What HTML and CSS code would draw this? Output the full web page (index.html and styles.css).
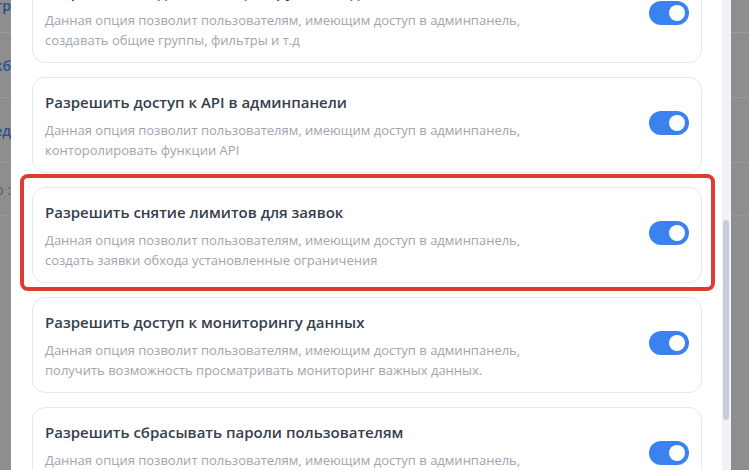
FILE: index.html
```html
<!DOCTYPE html>
<html lang="ru">
<head>
<meta charset="utf-8">
<link rel="stylesheet" href="styles.css">
</head>
<body>
<div class="screen">
  <div class="backdrop-left">
    <div class="bg-row bg-row-first"><span class="bg-link">Фильтр</span></div>
    <div class="bg-row"><span class="bg-link">Блокнот кб</span></div>
    <div class="bg-row"><span class="bg-link">Последствия ед</span></div>
    <div class="bg-row bg-row-short"><span class="bg-muted">Нет данных о :</span></div>
  </div>
  <div class="modal">
    <div class="modal-body">
      <div class="list">
        <div class="card">
          <div class="card-text">
            <div class="card-title">Разрешить создавать общие группы в админпанели</div>
            <div class="card-desc">Данная опция позволит пользователям, имеющим доступ в админпанель,<br>создавать общие группы, фильтры и т.д</div>
          </div>
          <span class="toggle"><span class="knob"></span></span>
        </div>
        <div class="card">
          <div class="card-text">
            <div class="card-title">Разрешить доступ к API в админпанели</div>
            <div class="card-desc">Данная опция позволит пользователям, имеющим доступ в админпанель,<br>конторолировать функции API</div>
          </div>
          <span class="toggle"><span class="knob"></span></span>
        </div>
        <div class="card card-highlight">
          <div class="card-text">
            <div class="card-title">Разрешить снятие лимитов для заявок</div>
            <div class="card-desc">Данная опция позволит пользователям, имеющим доступ в админпанель,<br>создать заявки обхода установленные ограничения</div>
          </div>
          <span class="toggle"><span class="knob"></span></span>
        </div>
        <div class="card">
          <div class="card-text">
            <div class="card-title">Разрешить доступ к мониторингу данных</div>
            <div class="card-desc">Данная опция позволит пользователям, имеющим доступ в админпанель,<br>получить возможность просматривать мониторинг важных данных.</div>
          </div>
          <span class="toggle"><span class="knob"></span></span>
        </div>
        <div class="card">
          <div class="card-text">
            <div class="card-title">Разрешить сбрасывать пароли пользователям</div>
            <div class="card-desc">Данная опция позволит пользователям, имеющим доступ в админпанель,<br>сбрасывать пароли других пользователей</div>
          </div>
          <span class="toggle"><span class="knob"></span></span>
        </div>
      </div>
    </div>
    <div class="scrollbar"><div class="thumb"></div></div>
  </div>
  <div class="backdrop-right">
    <div class="bg-row bg-row-first"></div>
    <div class="bg-row"></div>
    <div class="bg-row"></div>
    <div class="bg-row bg-row-short"></div>
  </div>
</div>
</body>
</html>
```

FILE: styles.css
```css
* { box-sizing: border-box; }
html, body {
  margin: 0;
  padding: 0;
  width: 749px;
  height: 470px;
  overflow: hidden;
  background: #8e8e8e;
  font-family: "Open Sans", "Noto Sans", sans-serif;
}
.screen {
  display: flex;
  width: 749px;
  height: 470px;
  overflow: hidden;
}
.backdrop-left, .backdrop-right {
  flex: none;
  display: flex;
  flex-direction: column;
  background: #8e8e8e;
  overflow: hidden;
}
.backdrop-left { width: 11px; }
.backdrop-right { width: 18px; }
.bg-row {
  flex: none;
  height: 65px;
  border-bottom: 1px solid #9b9b9b;
  display: flex;
  align-items: center;
  justify-content: flex-end;
  white-space: nowrap;
  font-size: 14px;
  font-weight: 600;
}
.bg-row-first {
  height: 33px;
  align-items: flex-start;
  padding-top: 0;
  line-height: 12px;
}
.bg-row-short { height: 53px; border-bottom-color: #979797; }
.bg-link { color: #2c4f8e; }
.bg-muted { color: #5f5f5f; font-weight: 400; }

.modal {
  flex: none;
  width: 720px;
  height: 470px;
  display: flex;
  background: #ffffff;
}
.modal-body {
  flex: 1;
  overflow: hidden;
  padding: 0 20px 0 21px;
}
.list {
  margin-top: -33px;
  display: flex;
  flex-direction: column;
  gap: 14px;
}
.card {
  position: relative;
  height: 96px;
  border: 1px solid #e6e8ed;
  border-radius: 13px;
  padding: 14px 12px 0 12px;
  display: flex;
  align-items: flex-start;
  justify-content: space-between;
}
.card-text { flex: 1; min-width: 0; }
.card-title {
  font-size: 15px;
  line-height: 20px;
  font-weight: 600;
  color: #363e4c;
  white-space: nowrap;
}
.card-desc {
  margin-top: 8px;
  font-size: 13px;
  line-height: 20px;
  color: #a0a5ae;
  white-space: nowrap;
}
.toggle {
  flex: none;
  margin-top: 19px;
  width: 40px;
  height: 24px;
  border-radius: 12px;
  background: #3b82f0;
  display: flex;
  align-items: center;
  justify-content: flex-end;
  padding-right: 4px;
}
.knob {
  width: 16px;
  height: 16px;
  border-radius: 50%;
  background: #ffffff;
}
.card-highlight::after {
  content: "";
  position: absolute;
  top: -14px;
  left: -13px;
  right: -14px;
  bottom: -9px;
  border: 4px solid #df3b30;
  border-radius: 8px;
  pointer-events: none;
}
.scrollbar {
  flex: none;
  width: 9px;
  background: #f1f3f8;
  padding: 220px 2px 0 1px;
}
.thumb {
  height: 200px;
  border-radius: 4px;
  background: #c6cdd6;
}
```
